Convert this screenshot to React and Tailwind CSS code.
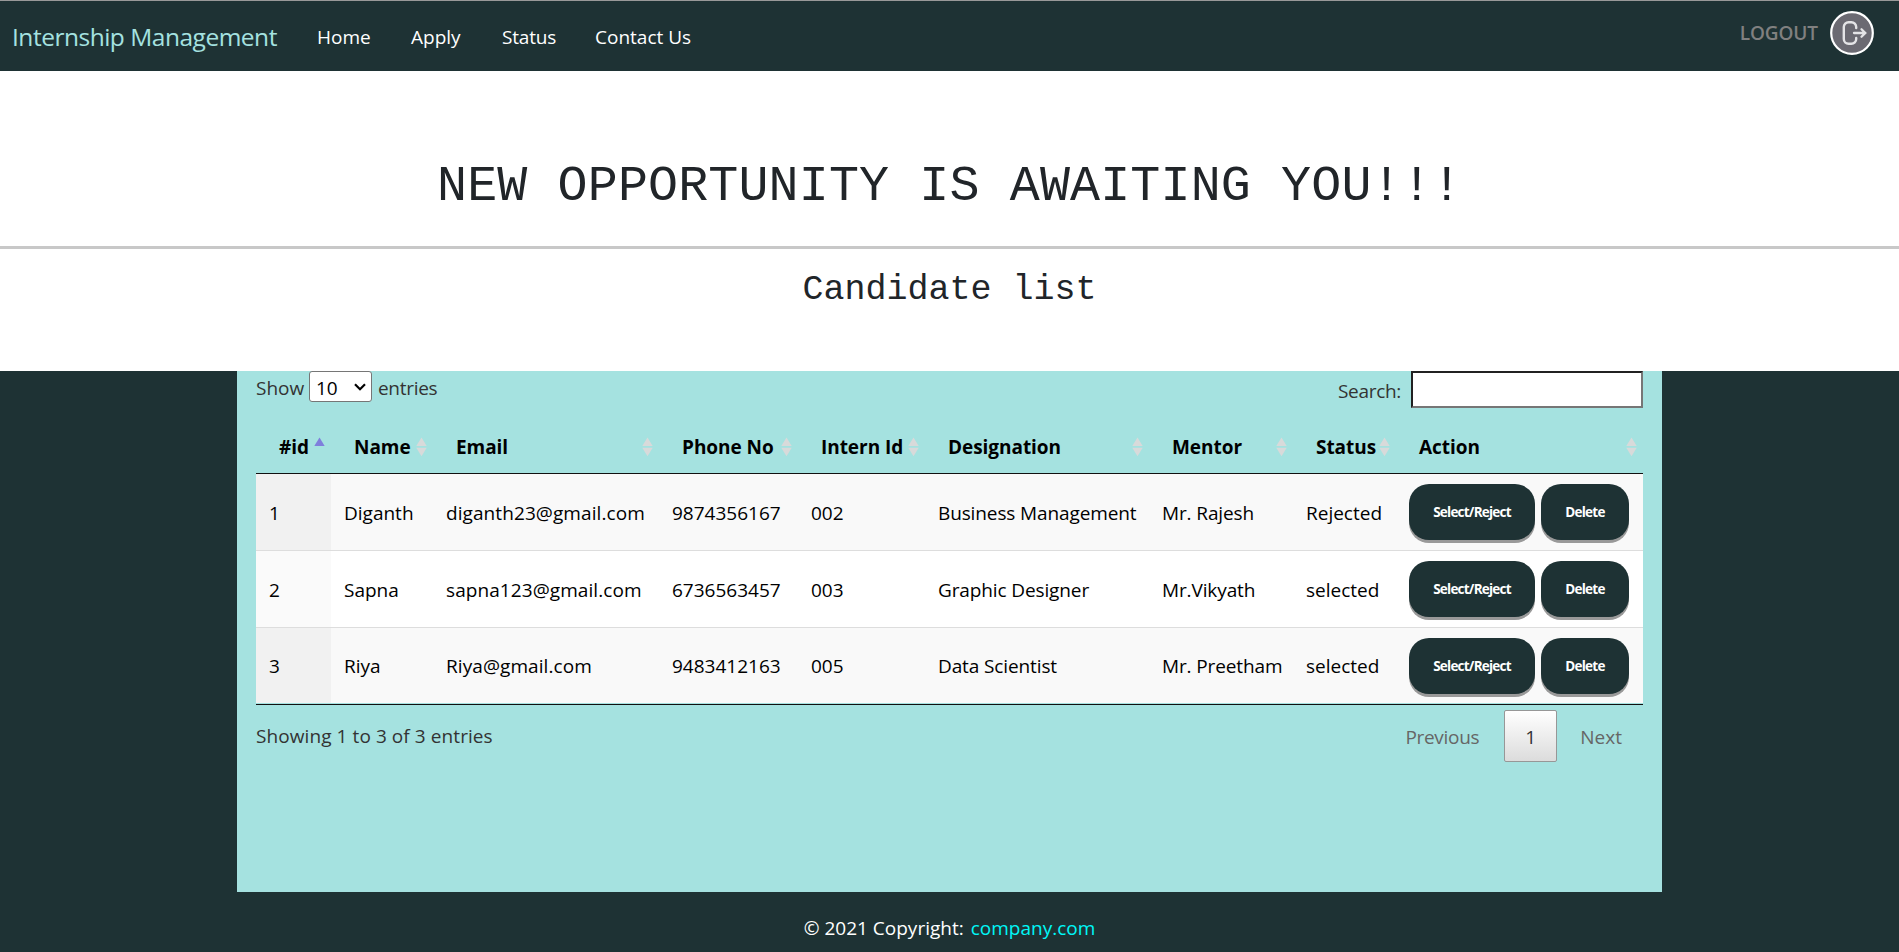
const columns = [
  { label: '#id', width: 'w-[75px]', sorted: true },
  { label: 'Name', width: 'w-[102px]' },
  { label: 'Email', width: 'w-[226px]' },
  { label: 'Phone No', width: 'w-[139px]' },
  { label: 'Intern Id', width: 'w-[127px]' },
  { label: 'Designation', width: 'w-[224px]' },
  { label: 'Mentor', width: 'w-[144px]' },
  { label: 'Status', width: 'w-[103px]' },
  { label: 'Action', width: 'w-[247px]' },
];

const rows = [
  ['1', 'Diganth', 'diganth23@gmail.com', '9874356167', '002', 'Business Management', 'Mr. Rajesh', 'Rejected'],
  ['2', 'Sapna', 'sapna123@gmail.com', '6736563457', '003', 'Graphic Designer', 'Mr.Vikyath', 'selected'],
  ['3', 'Riya', 'Riya@gmail.com', '9483412163', '005', 'Data Scientist', 'Mr. Preetham', 'selected'],
];

const rowHeights = ['h-[76px]', 'h-[77px]', 'h-[76px]'];

function SortIcon({ sorted }) {
  return (
    <svg className="mr-[6px] h-[20px] w-[11px] shrink-0" viewBox="0 0 11 20">
      <path d="M0.3 9 5.5 0.5 10.7 9Z" fill={sorted ? '#7f7fdc' : '#d8dada'} />
      {!sorted && <path d="M0.3 10.8 5.5 19.3 10.7 10.8Z" fill="#d8dada" />}
    </svg>
  );
}

function ActionButton({ children, width }) {
  return (
    <button
      className={`${width} h-[56px] rounded-[20px] bg-[#1e3234] pt-px text-[13.5px] font-bold tracking-[-0.77px] text-white shadow-[0_3px_0_#999]`}
    >
      {children}
    </button>
  );
}

function LogoutIcon() {
  return (
    <svg className="size-[44px]" viewBox="0 0 44 44" fill="none">
      <circle cx="22" cy="22" r="20.8" fill="#6b6a72" stroke="#fff" strokeWidth="2.2" />
      <path
        d="M26.2 17v-1a4.8 4.8 0 0 0-4.8-4.8h-2.8a4.8 4.8 0 0 0-4.8 4.8v12a4.8 4.8 0 0 0 4.8 4.8h2.8a4.8 4.8 0 0 0 4.8-4.8v-1"
        stroke="#e4e4e6"
        strokeWidth="2.4"
        strokeLinecap="round"
      />
      <path d="M24 22H35M31.5 18.2l3.8 3.8-3.8 3.8" stroke="#e4e4e6" strokeWidth="2.3" strokeLinecap="round" />
    </svg>
  );
}

export default function App() {
  return (
    <div className="flex h-[952px] w-[1899px] flex-col overflow-hidden whitespace-nowrap bg-[#1e3234] font-['Open_Sans',sans-serif] text-[19px]">
      <nav className="flex h-[71px] shrink-0 items-center border-t border-[#999] pl-[12px] pt-[2px] text-white">
        <a className="w-[305px] pt-px text-[24.5px] tracking-[-0.49px] text-[#a5e2e0]">Internship Management</a>
        <a className="w-[94px]">Home</a>
        <a className="w-[91px]">Apply</a>
        <a className="w-[93px] tracking-[-0.2px]">Status</a>
        <a>Contact Us</a>
        <div className="mb-[8px] ml-auto mr-[25px] flex items-center gap-[12px] text-[#808080]">
          <span className="font-semibold tracking-[-0.1px]">LOGOUT</span>
          <LogoutIcon />
        </div>
      </nav>

      <header className="flex h-[300px] shrink-0 flex-col items-center bg-white font-['Liberation_Mono',monospace] text-[#212529]">
        <h1 className="flex h-[175px] items-end pb-[30px] text-[50px] leading-[58px] tracking-[0.14px]">
          NEW OPPORTUNITY IS AWAITING YOU!!!
        </h1>
        <hr className="h-[3px] w-full border-0 bg-[#c8c8c8]" />
        <h2 className="mt-[19px] text-[35px] leading-[44px]">Candidate list</h2>
      </header>

      <main className="mx-auto flex h-[521px] w-[1425px] shrink-0 flex-col bg-[#a5e2e0] px-[19px] text-[#333]">
        <div className="flex h-[42px] items-start justify-between">
          <label className="flex items-center">
            <span className="w-[53px] pt-[3px]">Show</span>
            <span className="flex h-[31px] w-[63px] items-center justify-between rounded-[3px] border border-[#767676] bg-white pl-[6px] pr-[5px] text-black">
              <span className="pt-[3px]">10</span>
              <svg className="h-[8px] w-[12px]" viewBox="0 0 12 8" fill="none">
                <path d="M1 1.2 6 6.2 11 1.2" stroke="#000" strokeWidth="2.2" />
              </svg>
            </span>
            <span className="ml-[6px] pt-[3px] tracking-[-0.3px]">entries</span>
          </label>
          <label className="flex items-center gap-[10px]">
            <span className="pt-[3px] tracking-[-0.3px]">Search:</span>
            <input className="h-[37px] w-[232px] border-2 border-t-[#212121] border-l-[#212121] border-r-[#767676] border-b-[#767676] bg-white" />
          </label>
        </div>

        <table className="w-[1387px] table-fixed border-separate border-spacing-0 border-b border-[#111] pb-px text-black">
          <thead>
            <tr className="h-[61px]">
              {columns.map((c) => (
                <th key={c.label} className={`${c.width} border-b border-[#111] p-0 text-left font-bold`}>
                  <div className="flex items-center justify-between pl-[23px] pt-[8px]">
                    <span className="tracking-[-0.05px]">{c.label}</span>
                    <SortIcon sorted={c.sorted} />
                  </div>
                </th>
              ))}
            </tr>
          </thead>
          <tbody>
            {rows.map((r, i) => (
              <tr key={r[0]} className={`${rowHeights[i]} ${i % 2 === 0 ? 'bg-[#f9f9f9]' : 'bg-white'}`}>
                {r.map((v, j) => (
                  <td
                    key={j}
                    className={`p-0 pl-[13px] pt-[2px] ${i > 0 ? 'border-t border-[#ddd]' : ''} ${
                      j === 0 ? (i % 2 === 0 ? 'bg-[#f1f1f1]' : 'bg-[#fafafa]') : ''
                    } ${j === 5 || j === 6 ? 'tracking-[-0.12px]' : ''} ${j === 2 ? 'tracking-[0.08px]' : ''}`}
                  >
                    {v}
                  </td>
                ))}
                <td className={`p-0 pl-[13px] ${i > 0 ? 'border-t border-[#ddd]' : ''}`}>
                  <div className="flex gap-[6px]">
                    <ActionButton width="w-[126px]">Select/Reject</ActionButton>
                    <ActionButton width="w-[88px]">Delete</ActionButton>
                  </div>
                </td>
              </tr>
            ))}
          </tbody>
        </table>

        <div className="flex items-start justify-between pt-[5px]">
          <span className="pt-[12px] tracking-[0.08px]">Showing 1 to 3 of 3 entries</span>
          <div className="flex items-center pr-[21px] text-[#666]">
            <span className="pt-[2px] tracking-[-0.3px]">Previous</span>
            <span className="ml-[25px] mr-[23px] flex h-[52px] w-[53px] items-center justify-center rounded-[2px] border border-[#979797] bg-linear-to-b from-white to-[#dcdcdc] pt-[2px] text-[#333]">
              1
            </span>
            <span className="pt-[2px]">Next</span>
          </div>
        </div>
      </main>

      <footer className="flex h-[60px] items-center justify-center gap-[7px] pt-[12px] text-white">
        <span>© 2021 Copyright:</span>
        <a className="text-[#00f7f7]">company.com</a>
      </footer>
    </div>
  );
}
